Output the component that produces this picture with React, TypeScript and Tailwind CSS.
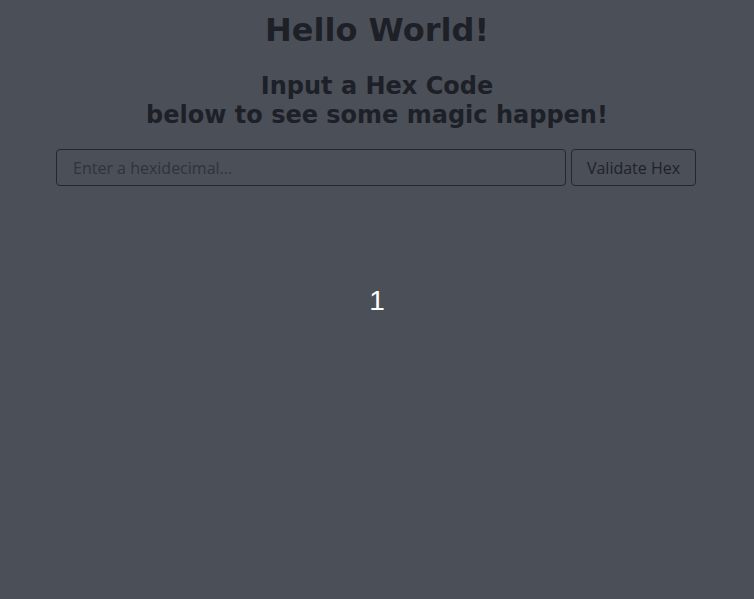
import React, { useState } from "react";

export default function App() {
  const [hex, setHex] = useState("");

  return (
    <div className="min-h-[599px] w-full bg-[#4b4f58] flex flex-col items-center font-['DejaVu_Sans',sans-serif]">
      <h1 className="mt-[12px] text-[32px] leading-[37px] font-bold text-[#1e2027]">Hello World!</h1>
      <h2 className="mt-[23px] text-[24px] leading-[29px] font-bold text-[#1e2027] text-center">
        Input a Hex Code
        <br />
        below to see some magic happen!
      </h2>

      <div className="mt-[19px] mr-[2px] flex w-[640px] gap-[5px]">
        <input
          value={hex}
          onChange={(e) => setHex(e.target.value)}
          placeholder="Enter a hexidecimal..."
          className="h-[37px] flex-1 rounded-[4px] border border-[#25272d] bg-transparent px-[16px] text-[16px] text-[#1e2027] placeholder:text-[#30333a] outline-none font-['Open_Sans',sans-serif]"
        />
        <button className="h-[37px] w-[125px] rounded-[4px] border border-[#25272d] bg-transparent text-[16px] text-[#202228] font-['Open_Sans',sans-serif]">
          Validate Hex
        </button>
      </div>

      <div className="mt-[99px] text-[28px] leading-[32px] text-white font-['Liberation_Sans',sans-serif]">1</div>
    </div>
  );
}
